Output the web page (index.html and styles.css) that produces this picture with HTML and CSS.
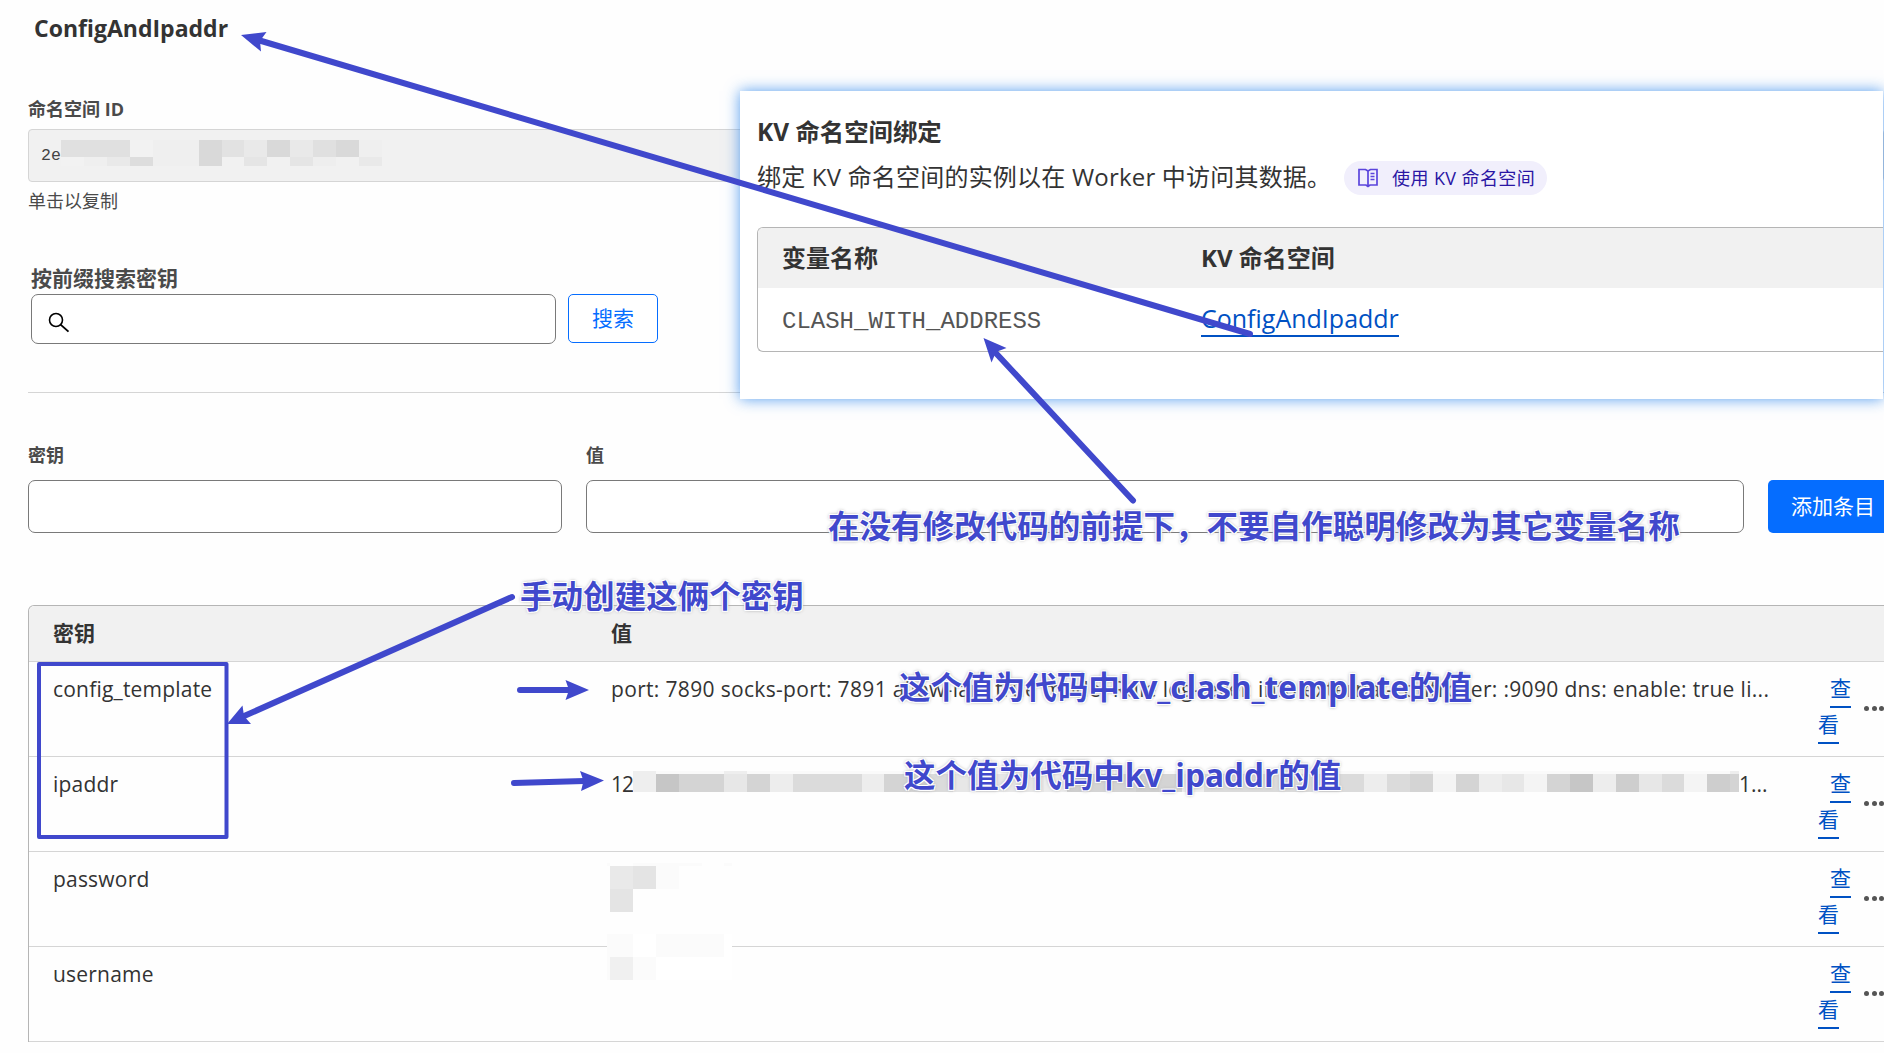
FILE: index.html
```html
<!DOCTYPE html>
<html lang="zh-CN">
<head>
<meta charset="utf-8">
<title>ConfigAndIpaddr</title>
<link rel="stylesheet" href="styles.css">
</head>
<body>
<main class="page">
  <h1 class="title">ConfigAndIpaddr</h1>

  <section class="namespace">
    <div class="label">命名空间 ID</div>
    <div class="id-box">
      <span class="id-text">2e</span>
      <svg class="id-mask" width="321" height="26" shape-rendering="crispEdges">
        <path fill="#e0e0e0" d="M0 0h69v17H0zM252 0h23v17h-23z"/>
        <path fill="#d9d9d9" d="M138 0h23v26h-23zM206 0h23v17h-23zM275 0h23v17h-23z"/>
        <path fill="#efefef" d="M92 0h46v26H92zM298 0h23v17h-23zM23 17h23v9H23z"/>
        <path fill="#e2e2e2" d="M161 0h22v17h-22z"/>
        <path fill="#e9e9e9" d="M183 0h23v17h-23zM229 0h23v17h-23zM46 17h23v9H46zM298 17h23v9h-23z"/>
        <path fill="#f2f2f2" d="M69 0h23v17H69zM0 17h23v9H0z"/>
        <path fill="#dddddd" d="M69 17h23v9H69z" transform="translate(0 0)"/>
        <path fill="#e5e5e5" d="M183 17h23v9h-23zM229 17h23v9h-23z"/>
        <path fill="#eeeeee" d="M252 17h23v9h-23z"/>
      </svg>
    </div>
    <div class="hint">单击以复制</div>
  </section>

  <section class="search">
    <div class="search-label">按前缀搜索密钥</div>
    <div class="search-row">
      <div class="search-input">
        <svg width="22" height="22" viewBox="0 0 22 22" fill="none" stroke="#000" stroke-width="1.6">
          <circle cx="8" cy="8" r="6.5"/><path d="M12.6 12.6L20.5 19.6" stroke-width="1.9"/>
        </svg>
      </div>
      <button class="search-button">搜索</button>
    </div>
  </section>

  <section class="entry">
    <div class="field field-key"><div class="label">密钥</div><div class="input"></div></div>
    <div class="field field-value"><div class="label">值</div><div class="input"></div></div>
    <button class="add-button">添加条目</button>
  </section>

  <section class="table">
    <div class="row head"><div>密钥</div><div>值</div></div>
    <div class="row">
      <div>config_template</div>
      <div class="value config">port: 7890 socks-port: 7891 allow-lan: true mode: Rule log-level: info external-controller: :9090 dns: enable: true li...</div>
      <div class="view"><a>查</a><a>看</a></div>
      <div class="more"><i></i><i></i><i></i></div>
    </div>
    <div class="row">
      <div>ipaddr</div>
      <div class="value masked"><span class="clip">12</span>
        <svg class="ip-mask" width="1106" height="21" shape-rendering="crispEdges">
          <path fill="#eeeeee" d="M0 0h23v21H0zM91 0h23v3H91zM777 0h23v3h-23zM1097 0h9v3h-9z"/>
          <path fill="#fafafa" d="M23 0h68v3H23zM114 0h663v3H114zM800 0h297v3H800z"/>
          <path fill="#c6c6c6" d="M23 3h23v18H23zM937 3h23v18h-23z"/>
          <path fill="#d4d4d4" d="M46 3h45v18H46zM114 3h23v18h-23zM251 3h46v18h-46zM457 3h92v18h-92zM777 3h23v18h-23zM823 3h23v18h-23zM914 3h23v18h-23zM1097 3h9v18h-9z"/>
          <path fill="#e7e7e7" d="M91 3h23v18H91zM320 3h91v18h-91zM869 3h22v18h-22zM1006 3h23v18h-23z"/>
          <path fill="#ededed" d="M137 3h23v18h-23zM229 3h22v18h-22zM411 3h23v18h-23zM549 3h22v18h-22zM731 3h23v18h-23zM846 3h23v18h-23zM960 3h23v18h-23z"/>
          <path fill="#dbdbdb" d="M160 3h69v18h-69zM297 3h23v18h-23zM571 3h160v18H571zM754 3h23v18h-23zM1029 3h22v18h-22z"/>
          <path fill="#cecece" d="M434 3h23v18h-23zM503 3h23v18h-23zM983 3h23v18h-23zM1074 3h23v18h-23z"/>
          <path fill="#f4f4f4" d="M800 3h23v18h-23zM891 3h23v18h-23zM1051 3h23v18h-23z"/>
        </svg><span>1...</span></div>
      <div class="view"><a>查</a><a>看</a></div>
      <div class="more"><i></i><i></i><i></i></div>
    </div>
    <div class="row">
      <div>password</div>
      <div class="value">
        <svg class="secret" width="125" height="49" shape-rendering="crispEdges">
          <path fill="#fbfbfb" d="M0 0h3v3H0zM26 0h69v3H26zM117 0h8v3h-8zM49 3h23v23H49z"/>
          <path fill="#e9e9e9" d="M3 3h23v23H3z"/><path fill="#e4e4e4" d="M26 3h23v23H26zM3 26h23v23H3z"/>
        </svg>
      </div>
      <div class="view"><a>查</a><a>看</a></div>
      <div class="more"><i></i><i></i><i></i></div>
    </div>
    <div class="row">
      <div>username</div>
      <div class="value">
        <svg class="secret raised" width="125" height="46" shape-rendering="crispEdges">
          <path fill="#fff" d="M0 0h125v46H0z"/>
          <path fill="#fbfbfb" d="M0 0h26v23H0zM49 0h68v23H49zM26 23h23v23H26zM0 23h3v23H0z"/>
          <path fill="#f0f0f0" d="M3 23h23v23H3z"/>
        </svg>
      </div>
      <div class="view"><a>查</a><a>看</a></div>
      <div class="more"><i></i><i></i><i></i></div>
    </div>
  </section>
</main>

<aside class="panel">
  <h2>KV 命名空间绑定</h2>
  <div class="panel-desc">
    <span class="desc-text">绑定 KV 命名空间的实例以在 Worker 中访问其数据。</span>
    <a class="pill">
      <svg width="20" height="20" viewBox="0 0 20 20" fill="none" stroke="#5b45dc" stroke-width="1.7">
        <path d="M1 1.5h6.500L10 3l2.500-1.500H19v15.500h-7L10 18.500 8 17H1zM10 3v15.500M12.500 5.500h4M12.500 8.500h4M12.500 11.500h4"/>
      </svg>
      <span class="pill-text">使用 KV 命名空间</span>
    </a>
  </div>
  <div class="bindings">
    <div class="binding-row binding-head"><div>变量名称</div><div>KV 命名空间</div></div>
    <div class="binding-row"><code>CLASH_WITH_ADDRESS</code><div><a class="link">ConfigAndIpaddr</a></div></div>
  </div>
</aside>

<svg class="arrows" width="1884" height="1053" viewBox="0 0 1884 1053">
  <g stroke="#4048cc" stroke-width="6" stroke-linecap="round" fill="none">
    <path d="M1250 334L258 40"/>
    <path d="M1133 500.500L993 350"/>
    <path d="M512 597L243 716.500"/>
    <path d="M520 690H571"/>
    <path d="M514 783L584 781"/>
    <rect x="39" y="664" width="187.500" height="173" stroke-width="4" stroke-linejoin="round"/>
  </g>
  <g fill="#4048cc">
    <path d="M241 35L266.500 32 260 41 261 51.500z"/>
    <path d="M983.500 338L1006.500 348 996 352 991.500 362.500z"/>
    <path d="M227 724L242.500 705.500 244 716 251 724z"/>
    <path d="M589 690L565.500 680 569 690 565.500 700z"/>
    <path d="M604 780.500L580 771 583.500 781 581 791z"/>
  </g>
</svg>
<div class="note note-variable">在没有修改代码的前提下，不要自作聪明修改为其它变量名称</div>
<div class="note note-keys">手动创建这俩个密钥</div>
<div class="note note-template">这个值为代码中kv_clash_template的值</div>
<div class="note note-ipaddr">这个值为代码中kv_ipaddr的值</div>
</body>
</html>
```
FILE: styles.css
```css
* { box-sizing: border-box; }

body {
  margin: 0;
  width: 1884px;
  height: 1053px;
  overflow: hidden;
  position: relative;
  background: #fefefe;
  color: #333;
  font-family: "Open Sans", "Noto Sans CJK SC", sans-serif;
}

h1, h2 { margin: 0; }
button { font-family: inherit; }

.page { padding-left: 28px; }

.title {
  padding: 12px 0 0 6px;
  font-size: 23px;
  line-height: 32px;
  font-weight: 700;
}

.label {
  font-size: 18px;
  line-height: 24px;
  font-weight: 700;
  color: #4a4a4a;
}

.namespace { padding-top: 53px; }

.id-box {
  display: flex;
  margin-top: 8px;
  height: 53px;
  padding: 10px 12px;
  background: #f1f1f1;
  border: 1px solid #d5d5d5;
  border-radius: 4px;
}

.id-text {
  width: 20px;
  font: 16.500px/32px "Liberation Mono", monospace;
  color: #444;
}

.hint {
  margin-top: 7px;
  font-size: 18px;
  line-height: 24px;
  font-weight: 400;
  color: #4a4a4a;
}

.search {
  margin-top: 51px;
  padding: 0 0 48px 3px;
  border-bottom: 1px solid #d5d5d5;
}

.search-label {
  margin-bottom: 2px;
  font-size: 21px;
  line-height: 28px;
  font-weight: 700;
  color: #4a4a4a;
}

.search-row { display: flex; gap: 12px; }

.search-input {
  width: 525px;
  height: 50px;
  padding: 17px 0 0 16px;
  background: #fff;
  border: 1px solid #797979;
  border-radius: 7px;
}

.search-button {
  width: 90px;
  height: 49px;
  padding: 0 0 3px;
  background: #fff;
  border: 1.500px solid #056dff;
  border-radius: 5px;
  color: #056dff;
  font-size: 21px;
}

.entry {
  display: flex;
  align-items: flex-end;
  gap: 24px;
  margin-top: 50px;
  width: 1880px;
}

.field-key { width: 534px; }
.field-value { width: 1158px; }

.input {
  margin-top: 13px;
  height: 53px;
  background: #fff;
  border: 1px solid #797979;
  border-radius: 7px;
}

.add-button {
  width: 140px;
  height: 53px;
  padding: 0 0 3px 23px;
  border: 0;
  border-radius: 5px;
  background: #056dff;
  color: #fff;
  font-size: 21px;
  text-align: left;
}

.table {
  width: 1880px;
  margin-top: 72px;
  border: 1px solid #b5b5b5;
  border-bottom: 0;
  border-radius: 6px 0 0 0;
}

.row {
  display: grid;
  grid-template-columns: 558px 1207px 35px 60px;
  height: 95px;
  padding: 11px 0 0 24px;
  border-bottom: 1px solid #d5d5d5;
  font-size: 21px;
  line-height: 32px;
  letter-spacing: 0.200px;
}

.row.head {
  height: 56px;
  background: #f1f1f1;
  font-weight: 700;
  border-radius: 6px 0 0 0;
  letter-spacing: 0;
}

.value { white-space: nowrap; }
.config { letter-spacing: 0.330px; }
.masked { display: flex; }
.clip { width: 22px; letter-spacing: -1px; }
.ip-mask { margin-top: 3px; }
.masked span:last-child { letter-spacing: 0; }

.secret { display: block; margin: 0 0 0 -4px; }
.secret.raised { position: relative; top: -24px; }

.view {
  display: flex;
  flex-direction: column;
  padding-top: 1px;
  gap: 2px;
}

.view a {
  width: 21px;
  height: 34px;
  line-height: 28px;
  border-bottom: 2px solid #0051c3;
  color: #0051c3;
  letter-spacing: 0;
}

.view a:first-child { margin-left: 12px; }

.more { display: flex; gap: 2.500px; padding: 33px 0 0 11px; }
.more i { width: 5px; height: 5px; border-radius: 50%; background: #555; }

.panel {
  position: absolute;
  left: 740px;
  top: 91px;
  width: 1143px;
  height: 308px;
  padding: 23px 0 0 17px;
  background: #fff;
  box-shadow: 0 0 14px rgba(30, 125, 235, 0.75);
}

.panel h2 {
  font-size: 24.400px;
  line-height: 36px;
  font-weight: 700;
}

.panel-desc {
  display: flex;
  align-items: center;
  gap: 25px;
  margin-top: 11px;
  height: 34px;
  font-size: 24px;
  letter-spacing: 0.200px;
  white-space: nowrap;
}

.desc-text { width: 562px; padding-bottom: 5px; }

.pill {
  display: flex;
  align-items: center;
  gap: 14px;
  height: 34px;
  width: 203px;
  padding-left: 14px;
  border-radius: 17px;
  background: #f1effc;
  color: #2a16a4;
  font-size: 18px;
  letter-spacing: 0.400px;
}

.pill-text { padding-bottom: 3px; }

.bindings {
  height: 125px;
  margin-top: 32px;
  border: 1px solid #b5b5b5;
  border-right: 0;
  border-radius: 6px 0 0 6px;
  overflow: hidden;
}

.binding-row {
  display: grid;
  grid-template-columns: 419px 1fr;
  align-items: center;
  height: 62px;
  padding-left: 24px;
  font-size: 24px;
}

.binding-head {
  height: 60px;
  padding-bottom: 3px;
  background: #f1f1f1;
  font-weight: 700;
}

.binding-row code {
  font: 24px/36px "Liberation Mono", monospace;
  color: #555;
  padding-top: 5px;
}

.link {
  display: inline-block;
  height: 34px;
  line-height: 31px;
  font-size: 25px;
  color: #0051c3;
  border-bottom: 2px solid #0051c3;
}

.arrows { position: absolute; left: 0; top: 0; }

.note {
  position: absolute;
  font-size: 31.550px;
  line-height: 44px;
  font-weight: 700;
  color: #4048cc;
  white-space: nowrap;
  text-shadow: -1px -1px 0 #fff, 1px -1px 0 #fff, -1px 1px 0 #fff, 1px 1px 0 #fff,
    0 0 3px #aaa, 0 0 4px #bbb;
}

.note-variable { left: 828px; top: 504px; }
.note-keys { left: 520px; top: 574px; }
.note-template { left: 899px; top: 665px; }
.note-ipaddr { left: 904px; top: 753px; }
```
